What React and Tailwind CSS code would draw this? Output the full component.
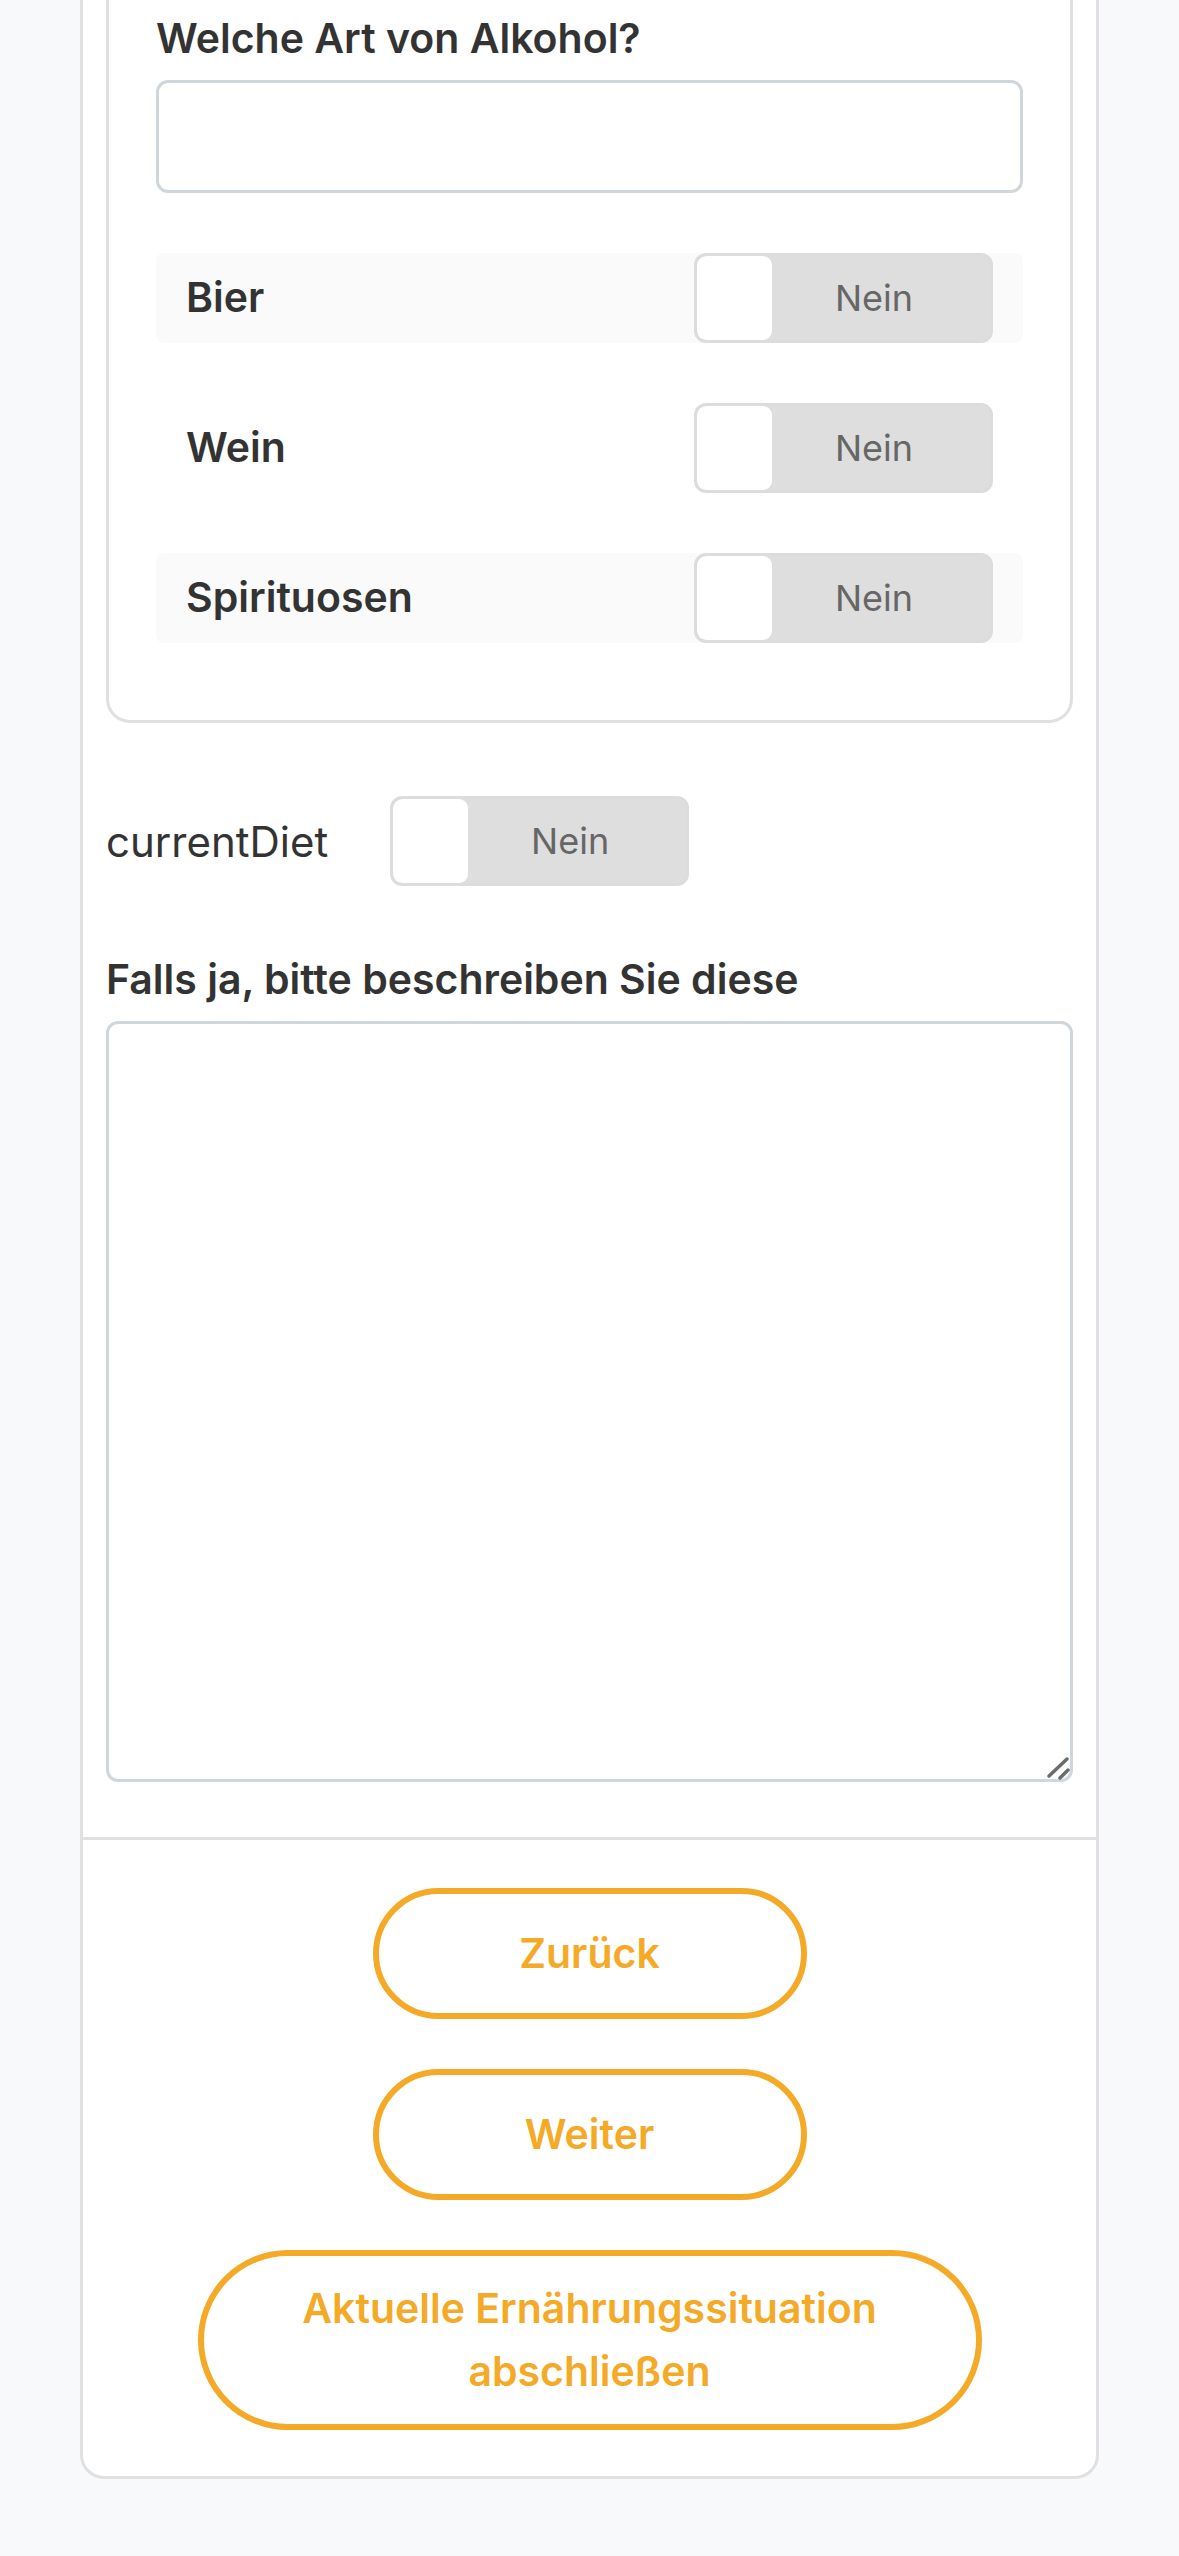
import { useState } from "react";

const font = { fontFamily: "Inter, 'Noto Sans', sans-serif" };

function Toggle({ value, onChange }) {
  return (
    <button
      type="button"
      onClick={() => onChange(!value)}
      className="flex w-[299px] h-[90px] shrink-0 rounded-[12px] border-[3px] border-[#dcdcdc] bg-[#dedede] overflow-hidden"
    >
      <span className="block w-[75px] h-full bg-white rounded-[9px]"></span>
      <span className="flex-1 flex items-center justify-center pr-[14px] text-[36px] text-[#666666]">
        {value ? "Ja" : "Nein"}
      </span>
    </button>
  );
}

function AlcoholRow({ label, striped, value, onChange }) {
  return (
    <div
      className={`flex items-center justify-between h-[90px] pl-[30px] pr-[30px] rounded-[8px] ${
        striped ? "bg-[#fafafa]" : ""
      }`}
    >
      <span className="text-[41px] font-semibold text-[#333333]">{label}</span>
      <Toggle value={value} onChange={onChange} />
    </div>
  );
}

function OutlineButton({ children, className = "" }) {
  return (
    <button
      type="button"
      className={`flex items-center justify-center rounded-full border-[6px] border-[#f4aa26] bg-white text-[41px] leading-[63px] font-semibold text-[#f4aa26] text-center ${className}`}
    >
      {children}
    </button>
  );
}

function ResizeGrip() {
  return (
    <svg
      className="absolute right-[3px] bottom-[2px] pointer-events-none"
      width="24"
      height="24"
      viewBox="0 0 24 24"
      fill="none"
      stroke="#6b6b6b"
      strokeWidth="3.5"
      strokeLinecap="round"
    >
      <path d="M3 20L21 3" />
      <path d="M14 22L22 14" />
    </svg>
  );
}

export default function App() {
  const [drinks, setDrinks] = useState({ bier: false, wein: false, spirituosen: false });
  const [currentDiet, setCurrentDiet] = useState(false);

  const setDrink = (key) => (v) => setDrinks({ ...drinks, [key]: v });

  return (
    <div className="min-h-screen bg-[#f8f9fa] pb-[80px]" style={font}>
      <div className="-mt-[69px] mx-[80px] bg-white border-[3px] border-[#e0e0e0] rounded-[24px]">
        <div className="px-[23px] pt-[23px] pb-[55px]">
          {/* alcohol sub-section */}
          <div className="border-[3px] border-[#e0e0e0] rounded-[24px] px-[47px] pt-[48px] pb-[77px]">
            <label className="block text-[41px] leading-[60px] font-semibold text-[#333333]">
              Welche Art von Alkohol?
            </label>
            <input
              type="text"
              className="block mt-[12px] w-full h-[113px] border-[3px] border-[#d1d6dc] rounded-[12px] px-[24px] text-[40px] outline-none"
            />
            <div className="mt-[60px] flex flex-col gap-[60px]">
              <AlcoholRow label="Bier" striped value={drinks.bier} onChange={setDrink("bier")} />
              <AlcoholRow label="Wein" value={drinks.wein} onChange={setDrink("wein")} />
              <AlcoholRow
                label="Spirituosen"
                striped
                value={drinks.spirituosen}
                onChange={setDrink("spirituosen")}
              />
            </div>
          </div>

          <div className="mt-[73px] flex items-center gap-[62px]">
            <span className="text-[42px] text-[#333333]">currentDiet</span>
            <Toggle value={currentDiet} onChange={setCurrentDiet} />
          </div>

          <label className="block mt-[63px] text-[41px] leading-[60px] font-semibold text-[#333333]">
            Falls ja, bitte beschreiben Sie diese
          </label>
          <div className="relative mt-[12px]">
            <textarea className="block w-full h-[761px] border-[3px] border-[#d1d6dc] rounded-[12px] p-[24px] text-[40px] outline-none resize-none"></textarea>
            <ResizeGrip />
          </div>
        </div>

        <div className="border-t-[3px] border-[#e0e0e0] pt-[48px] pb-[46px] flex flex-col items-center gap-[50px]">
          <OutlineButton className="w-[434px] h-[131px]">Zurück</OutlineButton>
          <OutlineButton className="w-[434px] h-[131px]">Weiter</OutlineButton>
          <OutlineButton className="w-[784px] h-[180px] px-[80px]">
            Aktuelle Ernährungssituation abschließen
          </OutlineButton>
        </div>
      </div>
    </div>
  );
}
